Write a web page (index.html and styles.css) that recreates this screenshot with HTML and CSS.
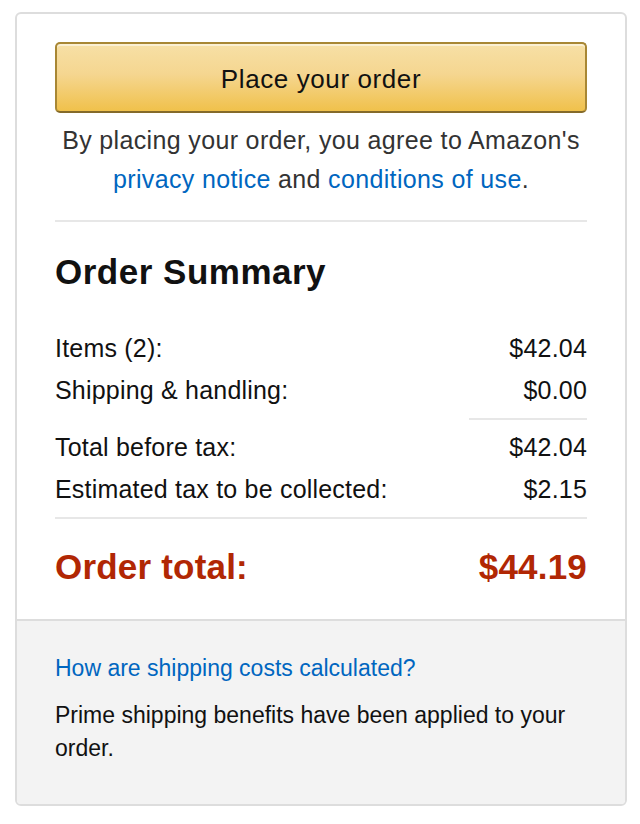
FILE: index.html
```html
<!DOCTYPE html>
<html lang="en">
<head>
<meta charset="utf-8">
<title>Order Summary</title>
<link rel="stylesheet" href="styles.css">
</head>
<body>
<div class="card">
  <div class="card-main">
    <button class="place-btn" type="button">Place your order</button>
    <p class="agree">By placing your order, you agree to Amazon's <a href="#">privacy notice</a> and <a href="#">conditions of use</a>.</p>
    <hr class="divider">
    <h3 class="title">Order Summary</h3>
    <div class="row"><span>Items (2):</span><span>$42.04</span></div>
    <div class="row"><span>Shipping &amp; handling:</span><span>$0.00</span></div>
    <div class="short-rule"><span></span></div>
    <div class="row"><span>Total before tax:</span><span>$42.04</span></div>
    <div class="row"><span>Estimated tax to be collected:</span><span>$2.15</span></div>
    <hr class="divider divider-tight">
    <div class="row total"><span>Order total:</span><span>$44.19</span></div>
  </div>
  <div class="card-foot">
    <a class="foot-link" href="#">How are shipping costs calculated?</a>
    <p class="foot-text">Prime shipping benefits have been applied to your order.</p>
  </div>
</div>
</body>
</html>
```
FILE: styles.css
```css
html, body {
  margin: 0;
  padding: 0;
  background: #fff;
}
body {
  font-family: "Liberation Sans", Arial, sans-serif;
  color: #111;
  padding: 12px 0 0 15px;
}
.card {
  width: 608px;
  border: 2px solid #dddddd;
  border-radius: 6px;
  overflow: hidden;
}
.card-main {
  padding: 28px 38px 30px 38px;
}
.place-btn {
  display: block;
  width: 100%;
  height: 71px;
  margin: 0;
  padding: 3px 0 0 0;
  border: 2px solid #a88734;
  border-bottom-color: #846a29;
  border-radius: 5px;
  background: linear-gradient(to bottom, #f7e0a6 0%, #f5d690 45%, #f0c14b 100%);
  box-shadow: inset 0 2px 0 rgba(255,255,255,0.5);
  font-family: "Liberation Sans", Arial, sans-serif;
  font-size: 26px;
  color: #111;
  letter-spacing: 0.6px;
  cursor: pointer;
}
.agree {
  margin: 8px 0 0 0;
  font-size: 25px;
  line-height: 39px;
  text-align: center;
  color: #333;
  letter-spacing: 0.35px;
}
.agree a, .foot-link {
  color: #0066c0;
  text-decoration: none;
}
.divider {
  border: 0;
  height: 2px;
  background: #e7e7e7;
  margin: 21px 0 0 0;
}
.divider-tight {
  margin-top: 7px;
}
.title {
  margin: 29px 0 34px 0;
  font-size: 35px;
  line-height: 42px;
  font-weight: bold;
  color: #111;
  letter-spacing: 0.5px;
}
.row {
  display: flex;
  justify-content: space-between;
  font-size: 25px;
  line-height: 42px;
  color: #111;
  letter-spacing: 0.2px;
}
.short-rule {
  display: flex;
  justify-content: flex-end;
  margin: 7px 0 6px 0;
}
.short-rule span {
  display: block;
  width: 118px;
  height: 2px;
  background: #e7e7e7;
}
.row.total {
  margin-top: 26px;
  font-size: 35px;
  line-height: 44px;
  font-weight: bold;
  color: #b12704;
  letter-spacing: 0.2px;
}
.card-foot {
  border-top: 2px solid #dddddd;
  background: #f3f3f3;
  padding: 31px 38px 39px 38px;
}
.foot-link {
  display: block;
  font-size: 23px;
  line-height: 33px;
}
.foot-text {
  margin: 14px 0 0 0;
  font-size: 23px;
  line-height: 33px;
  color: #111;
}
```
